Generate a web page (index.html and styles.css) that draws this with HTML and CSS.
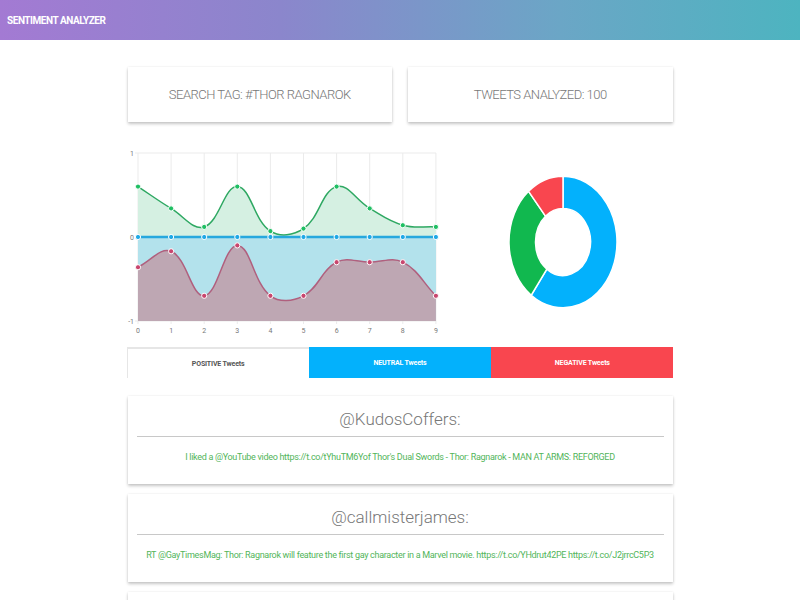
FILE: index.html
```html
<!DOCTYPE html>
<html lang="en">
<head>
<meta charset="utf-8">
<title>Sentiment Analyzer</title>
<link rel="stylesheet" href="styles.css">
</head>
<body>
<header class="topbar"><span class="brand">SENTIMENT ANALYZER</span></header>
<main class="container">
  <section class="stats">
    <div class="card stat">SEARCH TAG: #THOR RAGNAROK</div>
    <div class="card stat">TWEETS ANALYZED: 100</div>
  </section>
  <section class="charts">
    <div class="line-chart">
      <svg id="line" width="312" height="190" viewBox="0 0 312 190">
        <g id="grid"></g>
        <path id="posFill" class="pos-fill"></path>
        <rect class="neu-fill" x="11" y="89" width="298" height="84"></rect>
        <path id="negFill" class="neg-fill"></path>
        <path id="posLine" class="pos-line"></path>
        <line class="neu-line" x1="11" y1="89" x2="309" y2="89"></line>
        <path id="negLine" class="neg-line"></path>
        <g id="points"></g>
        <g id="labels" class="axis-label"></g>
      </svg>
    </div>
    <div class="donut">
      <svg width="110" height="134" viewBox="-1 -1 110 110" preserveAspectRatio="none">
        <path class="seg seg-neu" d="M54 0 A54 54 0 1 1 22.26 97.69 L37.84 76.25 A27.5 27.5 0 1 0 54 26.5 Z"></path>
        <path class="seg seg-pos" d="M22.26 97.69 A54 54 0 0 1 19.58 12.39 L36.47 32.81 A27.5 27.5 0 0 0 37.84 76.25 Z"></path>
        <path class="seg seg-neg" d="M19.58 12.39 A54 54 0 0 1 54 0 L54 26.5 A27.5 27.5 0 0 0 36.47 32.81 Z"></path>
      </svg>
    </div>
  </section>
  <nav class="tabs">
    <div class="tab tab-pos">POSITIVE Tweets</div>
    <div class="tab tab-neu">NEUTRAL Tweets</div>
    <div class="tab tab-neg">NEGATIVE Tweets</div>
  </nav>
  <section class="tweets">
    <article class="card tweet">
      <h2 class="tweet-user">@KudosCoffers:</h2>
      <hr class="tweet-rule">
      <p class="tweet-text">I liked a @YouTube video https://t.co/tYhuTM6Yof Thor's Dual Swords - Thor: Ragnarok - MAN AT ARMS: REFORGED</p>
    </article>
    <article class="card tweet">
      <h2 class="tweet-user">@callmisterjames:</h2>
      <hr class="tweet-rule">
      <p class="tweet-text">RT @GayTimesMag: Thor: Ragnarok will feature the first gay character in a Marvel movie. https://t.co/YHdrut42PE https://t.co/J2jrrcC5P3</p>
    </article>
    <article class="card tweet tweet-empty"></article>
  </section>
</main>
<script src="script.js"></script>
</body>
</html>
```
FILE: styles.css
```css
* { box-sizing: border-box; }
html, body { margin: 0; padding: 0; background: #fff; }
body { font-family: Roboto, "Liberation Sans", Arial, sans-serif; color: #666; }

.topbar {
  height: 40px;
  padding: 9px 7px 0;
  background: linear-gradient(90deg, #a37ad3 0%, #8b86cc 35%, #6ba6c6 70%, #4db4c0 100%);
}
.brand { color: #fff; font-weight: 700; font-size: 10px; letter-spacing: -0.45px; }

.container { width: 547px; margin: 0 auto; padding-top: 27px; }

.card {
  background: #fff;
  box-shadow: 0 2px 3px rgba(0,0,0,0.22), 0 0 2px rgba(0,0,0,0.08);
}

.stats { display: grid; grid-template-columns: 1fr 1fr; gap: 16px; padding: 0 1px; }
.stat {
  height: 55px;
  display: flex; align-items: center; justify-content: center;
  font-weight: 300; font-size: 13px; letter-spacing: -0.5px; color: #777;
}

.charts { display: flex; margin-top: 26px; height: 190px; }
.line-chart { width: 312px; }
.line-chart svg, .donut svg { display: block; }
.donut { padding-top: 27px; margin-left: 69px; }

.pos-fill { fill: #d5f0e2; }
.neu-fill { fill: #b3e2ec; }
.neg-fill { fill: #bea7b3; }
.pos-line { fill: none; stroke: #2ea862; stroke-width: 1.5; }
.neu-line { stroke: #26a8de; stroke-width: 2.5; }
.neg-line { fill: none; stroke: #b0607e; stroke-width: 1.5; }
.grid-line { stroke: #ebebeb; stroke-width: 1; }
.pt { stroke: #fff; stroke-width: 1; }
.pt-pos { fill: #1fbf63; }
.pt-neu { fill: #1fa9e6; }
.pt-neg { fill: #c8466e; }
.axis-label { font-family: Roboto, "Liberation Sans", sans-serif; font-size: 7px; fill: #777; }

.seg { stroke: #fff; stroke-width: 1.5; vector-effect: non-scaling-stroke; }
.seg-neu { fill: #03b1fc; }
.seg-pos { fill: #11b84f; }
.seg-neg { fill: #f9464f; }

.tabs { display: grid; grid-template-columns: 1fr 1fr 1fr; margin-top: 9px; height: 31px; }
.tab {
  display: flex; align-items: center; justify-content: center;
  font-size: 7px; font-weight: 700; letter-spacing: -0.15px; color: #fff;
}
.tab-pos { color: #555; background: #fff; border-top: 2px solid #e6e6e6; border-left: 1px solid #e6e6e6; }
.tab-neu { background: #03b1fc; }
.tab-neg { background: #f9464f; }

.tweets { margin-top: 18px; display: flex; flex-direction: column; gap: 10px; padding: 0 1px; }
.tweet { height: 88px; padding: 13px 9px 0; text-align: center; }
.tweet-user { margin: 0; font-weight: 300; font-size: 17px; line-height: 20px; color: #777; }
.tweet-rule { margin: 7px 0 0; border: 0; border-top: 1px solid #c8c8c8; }
.tweet-text { margin: 13px 0 0; font-size: 9px; letter-spacing: -0.3px; line-height: 14px; color: #52b55a; }
```
FILE: script.js
```js
(function () {
  var NS = "http://www.w3.org/2000/svg";
  var X = function (i) { return 11 + i * 33.1; };
  var Y = function (v) { return 89 - v * 84; };
  var pos = [0.6, 0.34, 0.12, 0.6, 0.07, 0.1, 0.6, 0.34, 0.14, 0.12];
  var neg = [-0.36, -0.17, -0.7, -0.1, -0.7, -0.7, -0.3, -0.3, -0.3, -0.7];

  function curve(vals) {
    var p = vals.map(function (v, i) { return [X(i), Y(v)]; });
    var t = 0.4, cps = [];
    for (var i = 0; i < p.length; i++) {
      var pr = p[i - 1] || p[i], cu = p[i], nx = p[i + 1] || p[i];
      var d01 = Math.hypot(cu[0] - pr[0], cu[1] - pr[1]);
      var d12 = Math.hypot(nx[0] - cu[0], nx[1] - cu[1]);
      var s01 = d01 / (d01 + d12 || 1), s12 = d12 / (d01 + d12 || 1);
      var fa = t * s01, fb = t * s12;
      cps.push({
        a: [cu[0] - fa * (nx[0] - pr[0]), cu[1] - fa * (nx[1] - pr[1])],
        b: [cu[0] + fb * (nx[0] - pr[0]), cu[1] + fb * (nx[1] - pr[1])]
      });
    }
    var d = "M" + p[0][0] + " " + p[0][1];
    for (var j = 1; j < p.length; j++) {
      d += " C" + cps[j - 1].b.join(" ") + " " + cps[j].a.join(" ") + " " + p[j].join(" ");
    }
    return d;
  }

  function el(name, attrs, parent) {
    var e = document.createElementNS(NS, name);
    for (var k in attrs) e.setAttribute(k, attrs[k]);
    parent.appendChild(e);
    return e;
  }

  var grid = document.getElementById("grid");
  for (var i = 0; i < 10; i++) {
    el("line", { x1: X(i), y1: 5, x2: X(i), y2: 176, "class": "grid-line" }, grid);
  }
  el("line", { x1: 8, y1: 5, x2: 309, y2: 5, "class": "grid-line" }, grid);
  el("line", { x1: 8, y1: 173, x2: 309, y2: 173, "class": "grid-line" }, grid);

  var pl = curve(pos), nl = curve(neg);
  document.getElementById("posLine").setAttribute("d", pl);
  document.getElementById("negLine").setAttribute("d", nl);
  document.getElementById("posFill").setAttribute("d", pl + " L" + X(9) + " 89 L" + X(0) + " 89 Z");
  document.getElementById("negFill").setAttribute("d", nl + " L" + X(9) + " 173 L" + X(0) + " 173 Z");

  var pts = document.getElementById("points");
  for (var k = 0; k < 10; k++) {
    el("circle", { cx: X(k), cy: Y(pos[k]), r: 2.6, "class": "pt pt-pos" }, pts);
    el("circle", { cx: X(k), cy: 89, r: 2.6, "class": "pt pt-neu" }, pts);
    el("circle", { cx: X(k), cy: Y(neg[k]), r: 2.6, "class": "pt pt-neg" }, pts);
  }

  var labels = document.getElementById("labels");
  [["1", 5], ["0", 89], ["-1", 173]].forEach(function (l) {
    var t = el("text", { x: 7, y: l[1] + 2.5, "text-anchor": "end" }, labels);
    t.textContent = l[0];
  });
  for (var m = 0; m < 10; m++) {
    var tx = el("text", { x: X(m), y: 185, "text-anchor": "middle" }, labels);
    tx.textContent = String(m);
  }
})();
```
